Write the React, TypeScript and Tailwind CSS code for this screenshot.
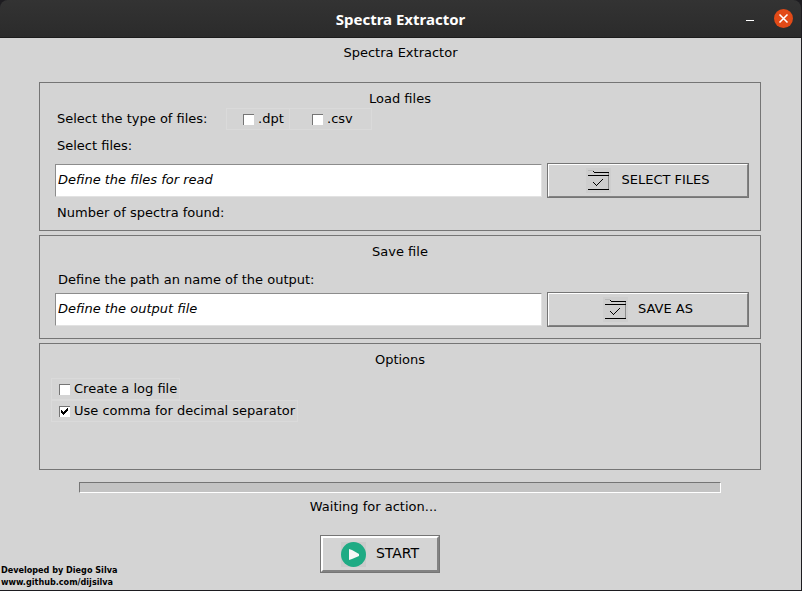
import { useState } from "react";
import type { ReactNode } from "react";

function FolderIcon() {
  return (
    <svg width="25" height="25" viewBox="0 0 25 25" shapeRendering="crispEdges" aria-hidden="true">
      <rect width="25" height="25" fill="#cecece" />
      <path d="M2 2h5v1H2z" fill="#b8b8b8" />
      <path d="M22 4h1v18h-1z" fill="#8c8c8c" />
      <path
        d="M7 3h1v1H7zM8 4h15v1H8zM2 7h21v1H2zM2 21h21v1H2zM7 14h1v1H7zM8 15h1v1H8zM9 16h1v1H9zM10 17h1v1h-1zM11 16h1v1h-1zM12 15h1v1h-1zM13 14h1v1h-1zM14 13h1v1h-1zM15 12h1v1h-1zM16 11h1v1h-1z"
        fill="#000"
      />
    </svg>
  );
}

function PlayIcon() {
  return (
    <svg width="25" height="25" viewBox="0 0 25 25" aria-hidden="true">
      <rect width="25" height="25" fill="#cbcbcb" />
      <circle cx="12.5" cy="12.5" r="12.5" fill="#1fab84" />
      <path d="M8 7v11l3-1 7-3v-2l-7-4z" fill="#f7f7f7" />
    </svg>
  );
}

function Panel({ title, className, children }: { title: string; className: string; children: ReactNode }) {
  return (
    <section className={`border border-[#757575] pt-1.5 ${className}`}>
      <h2 className="text-center">{title}</h2>
      <div className="pr-[11px] pl-[15px]">{children}</div>
    </section>
  );
}

function Check({ label, className, initial = false }: { label: string; className: string; initial?: boolean }) {
  const [checked, setChecked] = useState(initial);
  return (
    <label className={`flex h-[22px] items-center gap-1 border border-[#dadada] ${className}`}>
      <span className="grid shrink-0">
        <input
          type="checkbox"
          checked={checked}
          onChange={(e) => setChecked(e.target.checked)}
          className="col-start-1 row-start-1 size-[11px] appearance-none border-t border-l border-[#757575] bg-white"
        />
        {checked && (
          <svg
            width="11"
            height="11"
            viewBox="0 0 11 11"
            className="pointer-events-none col-start-1 row-start-1"
            shapeRendering="crispEdges"
            aria-hidden="true"
          >
            <path d="M2 4h1v1h1v1h1v-1h1v-1h1v-1h1v-1h1v3h-1v1h-1v1h-1v1h-1v1h-1v-1h-1v-1h-1z" fill="#000" />
          </svg>
        )}
      </span>
      <span className="whitespace-nowrap">{label}</span>
    </label>
  );
}

function FileRow({ id, initial, action, className }: { id: string; initial: string; action: string; className: string }) {
  const [value, setValue] = useState(initial);
  return (
    <div className={`flex h-[35px] items-stretch gap-[5px] ${className}`}>
      <input
        id={id}
        value={value}
        onChange={(e) => setValue(e.target.value)}
        className="my-px min-w-0 flex-1 border border-t-[#8c8c8c] border-r-[#e2e2e2] border-b-[#e2e2e2] border-l-[#8c8c8c] bg-white px-0.5 pb-0.5 italic outline-none"
      />
      <button type="button" className="w-[202px] border border-[#757575]">
        <span className="flex h-full items-center justify-center gap-2.5 border border-t-white border-r-[#828282] border-b-[#828282] border-l-white">
          <FolderIcon />
          <span className="pb-0.5">{action}</span>
        </span>
      </button>
    </div>
  );
}

export default function App() {
  return (
    <div className="bg-[#1d1c20]">
      <div className="flex min-h-screen flex-col border-r border-b border-[#1d1c20] font-['DejaVu_Sans','Noto_Sans',sans-serif] text-[13px] leading-5 text-black">
        <header className="grid h-[38px] grid-cols-[1fr_auto_1fr] items-center rounded-t-lg border-b border-[#1c1c1c] bg-linear-to-b from-[#333333] to-[#2b2b2b] pr-2 pl-2">
          <h1 className="col-start-2 pt-px font-['Noto_Sans',sans-serif] text-[15px] font-bold text-white">
            Spectra Extractor
          </h1>
          <div className="flex items-center justify-end gap-5">
            <button type="button" aria-label="Minimize" className="flex h-5 w-2 items-center pt-1">
              <span className="h-px w-full bg-white" />
            </button>
            <button type="button" aria-label="Close" className="size-[19px] rounded-full bg-[#e24a17]">
              <svg width="19" height="19" viewBox="0 0 19 19" stroke="#fff" strokeWidth="1.6" aria-hidden="true">
                <path d="M5.5 5.5l8 8M13.5 5.5l-8 8" />
              </svg>
            </button>
          </div>
        </header>

        <main className="flex flex-1 flex-col bg-[#d4d4d4] pt-[5px]">
          <p className="text-center">Spectra Extractor</p>

          <div className="mt-[19px] flex flex-col gap-1 pr-10 pl-[39px]">
            <Panel title="Load files" className="pb-[7px]">
              <div className="flex h-5 items-center pl-0.5">
                <span className="w-[169px]">Select the type of files:</span>
                <Check label=".dpt" className="w-16 pl-4" />
                <Check label=".csv" className="-ml-px w-[83px] pl-[22px]" />
              </div>
              <label htmlFor="input-files" className="mt-[7px] block pl-0.5">
                Select files:
              </label>
              <FileRow id="input-files" initial="Define the files for read" action="SELECT FILES" className="mt-[7px]" />
              <p className="mt-[5px] pl-0.5">Number of spectra found:</p>
            </Panel>

            <Panel title="Save file" className="pb-[11px]">
              <label htmlFor="output-file" className="mt-2 block pl-[3px]">
                Define the path an name of the output:
              </label>
              <FileRow id="output-file" initial="Define the output file" action="SAVE AS" className="mt-0.5" />
            </Panel>

            <Panel title="Options" className="pb-[47px]">
              <div className="mt-2 -ml-1 flex flex-col items-start">
                <Check label="Create a log file" className="pr-0.5 pl-[7px]" />
                <Check label="Use comma for decimal separator" initial className="pr-0.5 pl-[7px]" />
              </div>
            </Panel>
          </div>

          <div
            role="progressbar"
            aria-label="Progress"
            aria-valuenow={0}
            className="mt-3 mr-20 ml-[79px] h-[11px] border border-t-[#757575] border-r-white border-b-white border-l-[#757575] bg-[#c3c3c3]"
          />
          <p className="mt-1 pr-[54px] text-center">Waiting for action...</p>

          <div className="mt-[18px] grid flex-1 grid-cols-[1fr_auto_1fr] items-start pr-[41px]">
            <footer className="self-end pb-0.5 pl-px font-['DejaVu_Sans_Condensed','DejaVu_Sans',sans-serif] text-[9px] leading-3 font-bold">
              <p>Developed by Diego Silva</p>
              <a href="https://www.github.com/dijsilva" className="block w-fit">
                www.github.com/dijsilva
              </a>
            </footer>
            <button type="button" className="mb-[17px] h-[38px] w-[120px] border border-[#757575] text-sm">
              <span className="flex h-full items-center justify-center gap-2.5 border-2 border-t-white border-r-[#828282] border-b-[#828282] border-l-white">
                <PlayIcon />
                <span className="pb-0.5">START</span>
              </span>
            </button>
          </div>
        </main>
      </div>
    </div>
  );
}
